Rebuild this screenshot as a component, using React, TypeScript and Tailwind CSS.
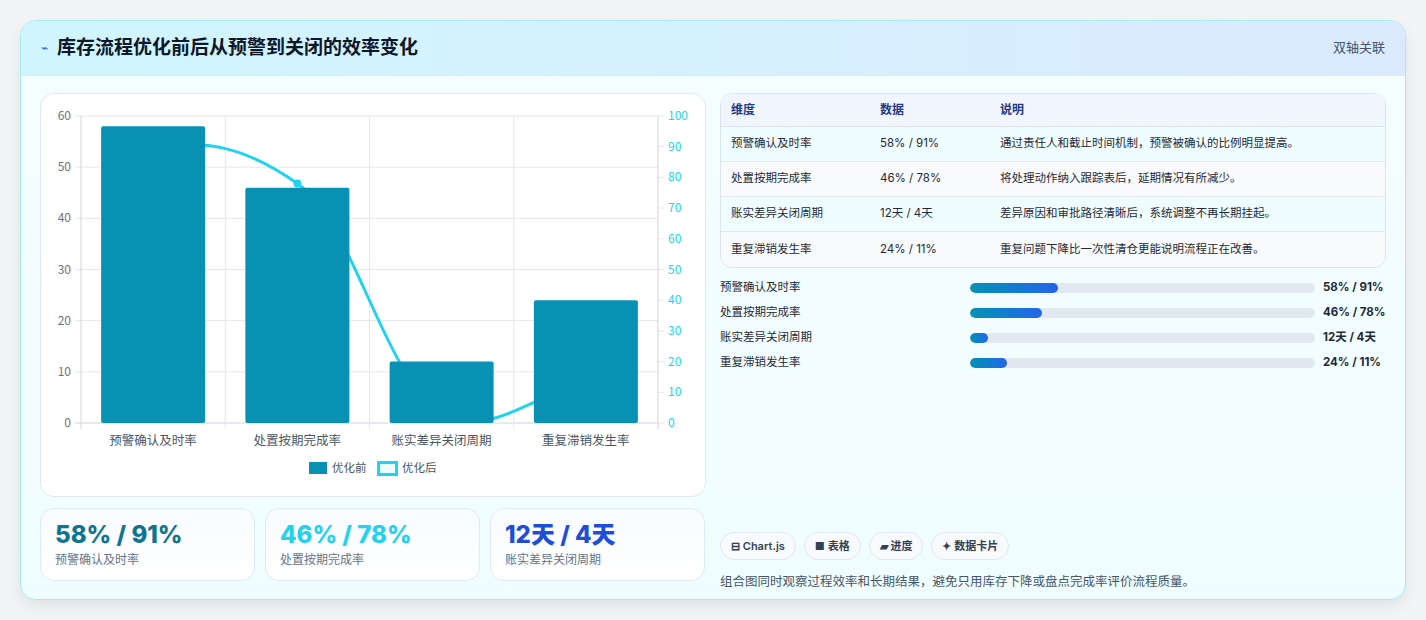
import React from "react";

const cats = ["预警确认及时率", "处置按期完成率", "账实差异关闭周期", "重复滞销发生率"];
const before = [58, 46, 12, 24];
const after = [91, 78, 4, 11];
const rows = [
  ["预警确认及时率", "58% / 91%", "通过责任人和截止时间机制，预警被确认的比例明显提高。"],
  ["处置按期完成率", "46% / 78%", "将处理动作纳入跟踪表后，延期情况有所减少。"],
  ["账实差异关闭周期", "12天 / 4天", "差异原因和审批路径清晰后，系统调整不再长期挂起。"],
  ["重复滞销发生率", "24% / 11%", "重复问题下降比一次性清仓更能说明流程正在改善。"],
];
const prog = [25.6, 21, 5.2, 10.7];

function Chart() {
  const L = 40, R = 617, T = 22, B = 329, H = B - T;
  const cw = (R - L) / 4;
  const yl = (v: number) => B - (v / 60) * H;
  const yr = (v: number) => B - (v / 100) * H;
  const pts = after.map((v, i) => [L + cw * (i + 0.5), yr(v)]);
  let d = `M${pts[0][0]},${pts[0][1]}`;
  for (let i = 0; i < 3; i++) {
    const [x0, y0] = pts[i], [x1, y1] = pts[i + 1];
    const dx = (x1 - x0) * 0.4;
    d += ` C${x0 + dx},${y0 + (i === 0 ? 0 : (y1 - pts[i - 1][1]) * 0.15)} ${x1 - dx},${y1 - (i === 2 ? 0 : (pts[i + 2][1] - y0) * 0.15)} ${x1},${y1}`;
  }
  return (
    <svg width="663" height="400" style={{ fontFamily: "'Noto Sans CJK SC', sans-serif" }}>
      {[0, 10, 20, 30, 40, 50, 60].map((v) => (
        <g key={v}>
          <line x1={L - 6} x2={R} y1={yl(v)} y2={yl(v)} stroke={v === 0 ? "#cbd5e1" : "#e5e7eb"} />
          <text x={L - 10} y={yl(v) + 4} fontSize="12" fill="#6b7280" textAnchor="end">{v}</text>
        </g>
      ))}
      {[0, 10, 20, 30, 40, 50, 60, 70, 80, 90, 100].map((v) => (
        <g key={v}>
          <line x1={R} x2={R + 6} y1={yr(v)} y2={yr(v)} stroke="#e5e7eb" />
          <text x={R + 10} y={yr(v) + 4} fontSize="12" fill="#22d3ee">{v}</text>
        </g>
      ))}
      {[0, 1, 2, 3, 4].map((i) => (
        <line key={i} x1={L + cw * i} x2={L + cw * i} y1={T} y2={B + 6} stroke={i === 0 || i === 4 ? "#d1d5db" : "#e5e7eb"} />
      ))}
      <path d={d} fill="none" stroke="#22d3ee" strokeWidth="3" />
      {pts.map((p, i) => <circle key={i} cx={p[0]} cy={p[1]} r="4" fill="#22d3ee" />)}
      {before.map((v, i) => (
        <rect key={i} x={L + cw * (i + 0.5) - 52} y={yl(v)} width="104" height={B - yl(v)} rx="2" fill="#0891b2" />
      ))}
      {cats.map((c, i) => (
        <text key={c} x={L + cw * (i + 0.5)} y={351} fontSize="12.5" fill="#4b5563" textAnchor="middle">{c}</text>
      ))}
      <rect x="268" y="368" width="18" height="12" fill="#0891b2" />
      <text x="291" y="378" fontSize="11.5" fill="#4b5563">优化前</text>
      <rect x="337.5" y="368.5" width="18" height="12" fill="#ecfeff" stroke="#22d3ee" strokeWidth="3" />
      <text x="361" y="378" fontSize="11.5" fill="#4b5563">优化后</text>
    </svg>
  );
}

export default function App() {
  return (
    <div className="min-h-[620px] bg-[#f3f4f6] pt-[20px] px-[20px]" style={{ fontFamily: "Inter, 'Noto Sans CJK SC', sans-serif" }}>
      <div className="w-[1386px] h-[580px] rounded-[16px] border border-[#a5e9f3] overflow-hidden bg-gradient-to-b from-[#f5fdff] to-[#f0fdff] shadow-[0_6px_16px_rgba(0,0,0,0.08)]">
        <div className="h-[55px] flex items-center justify-between px-[20px] bg-gradient-to-r from-[#cff6fd] to-[#dbeafe] border-b border-[#cdeff7]">
          <div className="flex items-center gap-[9px]">
            <span className="text-[#2563eb] text-[12px]">⌁</span>
            <span className="text-[19px] font-bold text-[#0f172a]">库存流程优化前后从预警到关闭的效率变化</span>
          </div>
          <span className="text-[13px] text-[#475569]">双轴关联</span>
        </div>
        <div className="flex gap-[14px] px-[19px] pt-[17px]">
          <div className="w-[666px] flex flex-col gap-[11px]">
            <div className="h-[404px] rounded-[14px] bg-white border border-[#e2e8f0]">
              <Chart />
            </div>
            <div className="flex gap-[10px]">
              {[
                ["58% / 91%", "text-[#0e7490]", "预警确认及时率"],
                ["46% / 78%", "text-[#22d3ee]", "处置按期完成率"],
                ["12天 / 4天", "text-[#1d4ed8]", "账实差异关闭周期"],
              ].map(([v, c, l]) => (
                <div key={l} className="w-[215px] h-[73px] rounded-[14px] border border-[#dbeafe] bg-gradient-to-b from-[#f8fbff] to-white px-[14px] pt-[11px]">
                  <div className={`text-[24px] leading-[30px] font-extrabold ${c}`}>{v}</div>
                  <div className="text-[12px] text-[#64748b] mt-[1px]">{l}</div>
                </div>
              ))}
            </div>
          </div>
          <div className="flex-1 flex flex-col">
            <div className="rounded-[12px] border border-[#dbe4ee] overflow-hidden">
              <div className="flex h-[33px] items-center bg-[#eff6ff] border-b border-[#dbe4ee] text-[12px] font-semibold text-[#1e3a8a]">
                <div className="w-[159px] pl-[10px]">维度</div>
                <div className="w-[120px]">数据</div>
                <div>说明</div>
              </div>
              {rows.map((r, i) => (
                <div key={i} className={`flex h-[35px] items-center text-[11.5px] text-[#1f2937] ${i < 3 ? "border-b border-[#e5e7eb]" : ""} ${i % 2 === 0 ? "bg-[#f0fdff]" : "bg-[#f8fafc]"}`}>
                  <div className="w-[159px] pl-[10px]">{r[0]}</div>
                  <div className="w-[120px]">{r[1]}</div>
                  <div>{r[2]}</div>
                </div>
              ))}
            </div>
            <div className="flex flex-col gap-[11px] mt-[13px]">
              {rows.map((r, i) => (
                <div key={i} className="flex items-center h-[14px] text-[11.5px]">
                  <div className="w-[250px] text-[#1f2937]">{r[0]}</div>
                  <div className="w-[345px] h-[10px] rounded-full bg-[#e2e8f0] overflow-hidden">
                    <div className="h-full rounded-full bg-gradient-to-r from-[#0891b2] to-[#2563eb]" style={{ width: `${prog[i]}%` }} />
                  </div>
                  <div className="ml-[8px] font-bold text-[#1f2937]">{r[1]}</div>
                </div>
              ))}
            </div>
            <div className="flex gap-[8px] mt-[162px]">
              {["⊟ Chart.js", "■ 表格", "▰ 进度", "✦ 数据卡片"].map((t) => (
                <span key={t} className="h-[28px] px-[10px] flex items-center rounded-full border border-[#e2e8f0] bg-[#f8fafc] text-[11px] font-semibold text-[#334155]">{t}</span>
              ))}
            </div>
            <div className="mt-[13px] text-[12.5px] text-[#475569]">组合图同时观察过程效率和长期结果，避免只用库存下降或盘点完成率评价流程质量。</div>
          </div>
        </div>
      </div>
    </div>
  );
}
